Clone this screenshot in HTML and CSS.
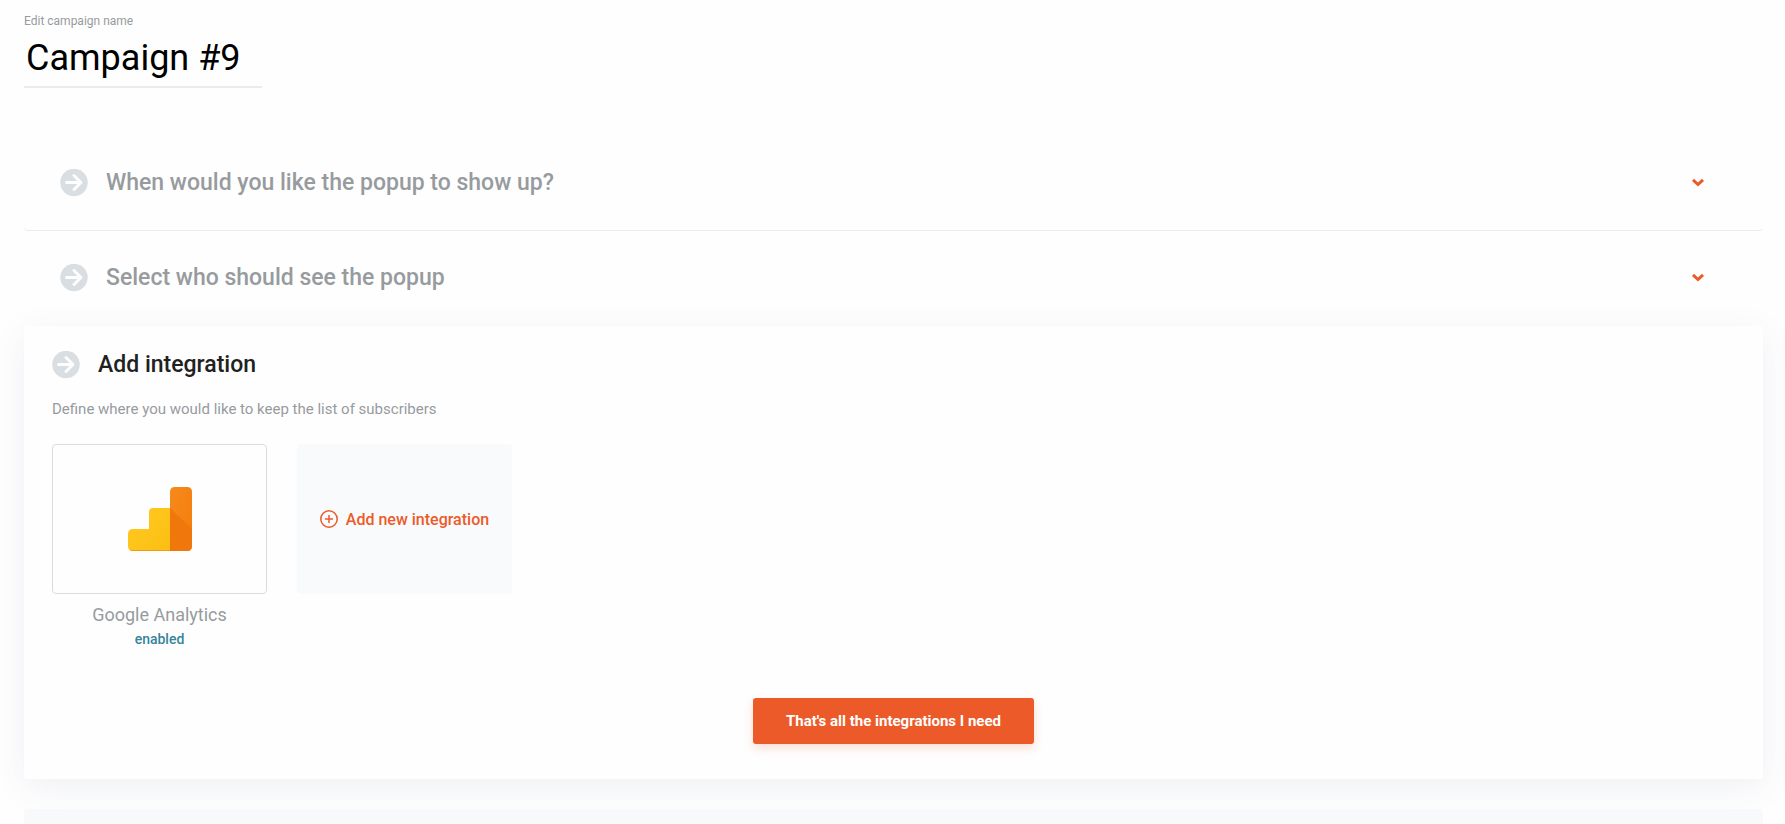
FILE: index.html
```html
<!DOCTYPE html>
<html lang="en">
<head>
<meta charset="utf-8">
<meta name="viewport" content="width=device-width, initial-scale=1">
<title>Campaign #9</title>
<link rel="stylesheet" href="styles.css">
</head>
<body>
<svg class="sprite" aria-hidden="true">
  <symbol id="arrow" viewBox="0 0 28 28">
    <circle cx="14" cy="13.5" r="13.7" fill="#d9dee2"/>
    <path d="M6.500 13.500H20.500M14 6.500l7 7-7 7" fill="none" stroke="#fefefe" stroke-width="3" stroke-linecap="round" stroke-linejoin="round"/>
  </symbol>
  <symbol id="chevron" viewBox="0 0 14 10">
    <path d="M2 1.800 7 6.500l5-4.700" fill="none" stroke="#ec5a29" stroke-width="3"/>
  </symbol>
</svg>
<main class="page">
  <header class="name">
    <label class="name-label" for="campaign">Edit campaign name</label>
    <input class="name-input" id="campaign" type="text" value="Campaign #9">
  </header>

  <button class="step" type="button">
    <svg class="step-icon" aria-hidden="true"><use href="#arrow"/></svg>
    <span class="step-title">When would you like the popup to show up?</span>
    <svg class="chevron" aria-hidden="true"><use href="#chevron"/></svg>
  </button>
  <button class="step step-last" type="button">
    <svg class="step-icon" aria-hidden="true"><use href="#arrow"/></svg>
    <span class="step-title">Select who should see the popup</span>
    <svg class="chevron" aria-hidden="true"><use href="#chevron"/></svg>
  </button>

  <section class="card">
    <div class="card-head">
      <svg class="step-icon" aria-hidden="true"><use href="#arrow"/></svg>
      <h2 class="card-title">Add integration</h2>
    </div>
    <p class="card-text">Define where you would like to keep the list of subscribers</p>
    <div class="tiles">
      <div class="integration">
        <button class="tile" type="button" aria-label="Google Analytics">
          <svg class="logo" viewBox="0 0 64 64" aria-hidden="true">
            <defs>
              <linearGradient id="yellow" x1="0" y1="0" x2="1" y2="1"><stop offset="0" stop-color="#ffc922"/><stop offset="1" stop-color="#fcbf12"/></linearGradient>
              <linearGradient id="orange" x1="0" y1="0" x2="1" y2="1"><stop offset="0" stop-color="#f58a1c"/><stop offset="1" stop-color="#f57c0a"/></linearGradient>
            </defs>
            <path d="M42 21H25q-4 0-4 4v17H5q-5 0-5 5v12q0 5 5 5h37z" fill="url(#yellow)"/>
            <path d="M1.500 62.500Q3 64 5 64h37v-1H5q-2 0-3.500-.5z" fill="#f19a12"/>
            <path d="M42 5q0-5 5-5h12q5 0 5 5v54q0 5-5 5H42z" fill="url(#orange)"/>
            <path d="M42 21l22 21v17q0 5-5 5H42z" fill="#ef770b"/>
          </svg>
        </button>
        <span class="integration-name">Google Analytics</span>
        <span class="integration-state">enabled</span>
      </div>
      <button class="tile tile-add" type="button">
        <svg class="plus" viewBox="0 0 18 18" aria-hidden="true">
          <circle cx="9" cy="9" r="8.200" fill="none" stroke="#ec5a29" stroke-width="1.500"/>
          <path d="M9 5v8M5 9h8" stroke="#ec5a29" stroke-width="1.500"/>
        </svg>
        Add new integration
      </button>
    </div>
    <button class="submit" type="button">That's all the integrations I need</button>
  </section>

  <div class="next"></div>
</main>
</body>
</html>
```
FILE: styles.css
```css
* { box-sizing: border-box; }
html { height: 100%; }
body {
  height: 100%;
  margin: 0;
  background: #fefefe;
  color: #212121;
  font-family: Roboto, "Liberation Sans", sans-serif;
  overflow: hidden;
}
button {
  margin: 0;
  border: 0;
  background: none;
  font-family: inherit;
  cursor: pointer;
}
.sprite { display: none; }
.page {
  display: flex;
  flex-direction: column;
  min-height: 100%;
  padding: 12px 22px 0 24px;
}
.name {
  display: flex;
  flex-direction: column;
  align-items: flex-start;
  margin-bottom: 48px;
}
.name-label {
  color: #979b9e;
  font-size: 12px;
  line-height: 18px;
}
.name-input {
  width: 238px;
  height: 58px;
  padding: 0 2px;
  border: 0;
  border-bottom: 2px solid #ebebeb;
  background: none;
  color: #000;
  font: 400 36px Roboto, "Liberation Sans", sans-serif;
  outline: 0;
}
.step {
  display: flex;
  align-items: center;
  gap: 18px;
  height: 95px;
  padding: 0 58px 0 36px;
  border-bottom: 1px solid #ebebeb;
  border-radius: 4px;
  text-align: left;
}
.step-last { border-bottom-color: transparent; }
.step-icon {
  flex: none;
  width: 28px;
  height: 28px;
}
.step-title {
  flex: 1;
  color: #979b9e;
  font-size: 23px;
  font-weight: 500;
  line-height: 32px;
}
.chevron {
  width: 14px;
  height: 10px;
}
.card {
  display: flex;
  flex-direction: column;
  padding: 24px 28px 35px;
  border-radius: 4px;
  background: #fefefe;
  box-shadow: 0 8px 34px rgba(60, 80, 130, 0.08);
}
.card-head {
  display: flex;
  align-items: center;
  gap: 18px;
}
.card-title {
  margin: 0;
  font-size: 23px;
  font-weight: 500;
  line-height: 30px;
}
.card-text {
  margin: 18px 0 24px;
  color: #979b9e;
  font-size: 15px;
  line-height: 22px;
}
.tiles {
  display: flex;
  align-items: flex-start;
  gap: 30px;
}
.integration {
  display: flex;
  flex-direction: column;
  align-items: center;
}
.tile {
  display: flex;
  align-items: center;
  justify-content: center;
  width: 215px;
  height: 150px;
  padding: 0;
  border: 1px solid #dcdcdc;
  border-radius: 4px;
}
.tile-add {
  gap: 8px;
  border-color: transparent;
  background: #f9fafc;
  color: #ec5a29;
  font-size: 16px;
  font-weight: 500;
}
.logo {
  width: 64px;
  height: 64px;
}
.plus {
  width: 18px;
  height: 18px;
}
.integration-name {
  margin-top: 8px;
  color: #979b9e;
  font-size: 18px;
  line-height: 26px;
}
.integration-state {
  color: #34859b;
  font-size: 14px;
  font-weight: 500;
  line-height: 22px;
}
.submit {
  align-self: center;
  height: 46px;
  margin-top: 48px;
  padding: 0 33px;
  border-radius: 3px;
  background: #ec5a29;
  box-shadow: 0 4px 10px rgba(236, 90, 41, 0.2);
  color: #fff;
  font-size: 15px;
  font-weight: 700;
}
.next {
  flex: 1;
  margin-top: 30px;
  border-radius: 4px 4px 0 0;
  background: #f8f9fb;
}
```
